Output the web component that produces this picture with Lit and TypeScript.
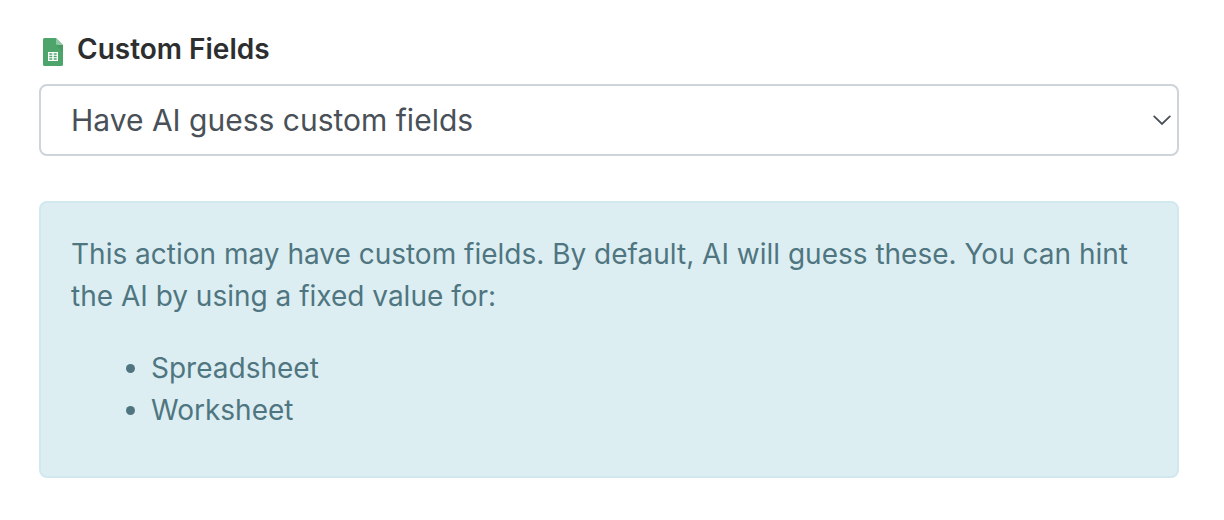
import { LitElement, html, css } from "lit";
import { customElement, state } from "lit/decorators.js";

@customElement("app-root")
export class AppRoot extends LitElement {
  static styles = css`
    :host {
      display: block;
      padding: 30px 45px 42px 39px;
      background: #fff;
      font-family: Inter, "Liberation Sans", sans-serif;
      color: #2d2e2f;
    }
    *, *::before, *::after { box-sizing: border-box; }
    .label {
      display: flex;
      align-items: center;
      gap: 14px;
      padding-left: 4px;
      margin-bottom: 16px;
      font-size: 28px;
      line-height: 38px;
      font-weight: 600;
    }
    .icon { width: 20px; height: 28px; margin-top: 6px; flex: none; }
    .field { display: grid; align-items: center; }
    .select, .chevron { grid-area: 1 / 1; }
    .select {
      appearance: none;
      width: 100%;
      height: 72px;
      margin: 0;
      padding: 0 48px 0 30px;
      border: 2px solid #ced4da;
      border-radius: 8px;
      background: #fff;
      font-family: inherit;
      font-size: 30px;
      color: #495057;
    }
    .chevron {
      justify-self: end;
      width: 18px;
      height: 12px;
      margin-right: 8px;
      pointer-events: none;
    }
    .notice {
      margin-top: 45px;
      padding: 30px 30px 45px;
      border: 2px solid #d1e8ee;
      border-radius: 8px;
      background: #ddeef3;
      color: #4f7680;
      font-size: 28px;
      line-height: 42px;
    }
    .text { margin: 0 0 30px; }
    .list { margin: 0; padding-left: 80px; }
  `;

  @state() private mode = "guess";

  render() {
    return html`
      <label class="label" for="mode">
        <svg class="icon" viewBox="0 0 20 28" aria-hidden="true">
          <path fill="#4ea56b" d="M1.5 0H13L20 7V26.5a1.5 1.5 0 0 1-1.5 1.5H1.5a1.5 1.5 0 0 1-1.5-1.5V1.5A1.5 1.5 0 0 1 1.5 0Z" />
          <path fill="#429259" d="M13 7H20V14Z" opacity=".5" />
          <path fill="#8fcaa5" d="M13 0L20 7H14.5A1.5 1.5 0 0 1 13 5.5Z" />
          <path fill="#fff" fill-rule="evenodd" d="M5 14H15V23H5ZM6.3 15.3V16.7H9.3V15.3ZM10.7 15.3V16.7H13.7V15.3ZM6.3 17.8V19.2H9.3V17.8ZM10.7 17.8V19.2H13.7V17.8ZM6.3 20.3V21.7H9.3V20.3ZM10.7 20.3V21.7H13.7V20.3Z" />
        </svg>
        <span>Custom Fields</span>
      </label>
      <div class="field">
        <select
          class="select"
          id="mode"
          .value=${this.mode}
          @change=${(e: Event) => (this.mode = (e.target as HTMLSelectElement).value)}
        >
          <option value="guess" selected>Have AI guess custom fields</option>
        </select>
        <svg class="chevron" viewBox="0 0 18 12" aria-hidden="true">
          <path d="M1.2 2.4L9 10L16.8 2.4" fill="none" stroke="#495057" stroke-width="1.8" stroke-linecap="round" />
        </svg>
      </div>
      <div class="notice">
        <p class="text">
          This action may have custom fields. By default, AI will guess these. You can hint the AI by using a fixed value for:
        </p>
        <ul class="list">
          <li>Spreadsheet</li>
          <li>Worksheet</li>
        </ul>
      </div>
    `;
  }
}
